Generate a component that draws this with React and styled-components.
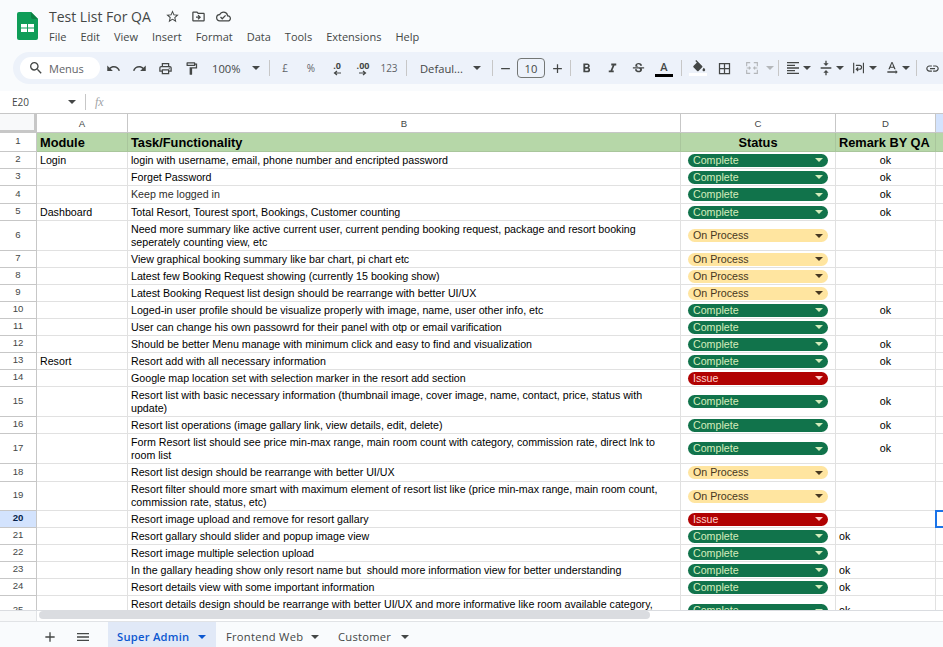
import React from 'react';
import styled, { createGlobalStyle } from 'styled-components';
import {
  MdSearch,
  MdUndo,
  MdRedo,
  MdOutlinePrint,
  MdOutlineFormatPaint,
  MdAdd,
  MdRemove,
  MdFormatBold,
  MdFormatItalic,
  MdStrikethroughS,
  MdBorderAll,
  MdFormatAlignLeft,
  MdVerticalAlignCenter,
  MdTextRotationNone,
  MdLink,
  MdStarBorder,
  MdOutlineDriveFileMove,
  MdOutlineCloudDone,
  MdMenu,
} from 'react-icons/md';

const GlobalStyle = createGlobalStyle`
  html, body { margin: 0; padding: 0; background: #fff; overflow: hidden; }
  * { box-sizing: border-box; }
`;

const UI_FONT = `"Open Sans", "Noto Sans", sans-serif`;
const CELL_FONT = `"Liberation Sans", Arial, sans-serif`;

const Page = styled.div`
  width: 943px;
  height: 647px;
  display: flex;
  flex-direction: column;
  overflow: hidden;
  font-family: ${UI_FONT};
  background: #fff;
`;

const Top = styled.header`
  height: 91px;
  background: #f9fbfd;
  flex-shrink: 0;
`;

const TitleBar = styled.div`
  height: 52px;
  display: flex;
  padding: 12px 0 0 17px;
`;

const TitleColumn = styled.div`
  margin-left: 11px;
  margin-top: -7px;
`;

const TitleRow = styled.div`
  display: flex;
  align-items: center;
  height: 22px;
  color: #444746;
`;

const DocTitle = styled.div`
  font-size: 14px;
  color: #444746;
  width: 111px;
  white-space: nowrap;
`;

const TitleIcon = styled.span`
  width: 25.5px;
  display: flex;
  justify-content: center;
  font-size: 15px;
  color: #444746;
`;

const MenuBar = styled.nav`
  display: flex;
  margin-left: -7px;
  margin-top: 2px;
`;

const MenuItem = styled.span`
  padding: 0 7px;
  font-size: 11px;
  line-height: 16px;
  color: #444746;
  white-space: nowrap;
`;

const Toolbar = styled.div`
  height: 32px;
  margin-left: 13px;
  padding-left: 7px;
  background: #edf2fa;
  border-radius: 16px 0 0 16px;
  display: flex;
  align-items: center;
  color: #444746;
  overflow: hidden;
`;

const SearchPill = styled.div`
  width: 80px;
  height: 22px;
  flex-shrink: 0;
  padding-left: 8px;
  background: #fff;
  border-radius: 11px;
  display: flex;
  align-items: center;
  gap: 5px;
  font-size: 11px;
  color: #5f6368;
  svg { font-size: 16px; color: #444746; }
`;

const Tool = styled.div`
  width: ${(p) => p.$w || 26}px;
  height: 24px;
  flex-shrink: 0;
  display: flex;
  align-items: center;
  justify-content: center;
  font-size: ${(p) => p.$size || 15}px;
  color: ${(p) => (p.$disabled ? '#b4b7ba' : '#444746')};
`;

const DropTool = styled.div`
  width: ${(p) => p.$w || 33}px;
  height: 24px;
  flex-shrink: 0;
  padding-left: ${(p) => p.$pad ?? 4}px;
  display: flex;
  align-items: center;
  font-size: ${(p) => p.$size || 11.2}px;
  color: ${(p) => (p.$disabled ? '#b4b7ba' : '#444746')};
  svg { width: 18px; height: 16px; flex-shrink: 0; }
`;

const ToolLabel = styled.span`
  width: ${(p) => p.$w}px;
  flex-shrink: 0;
  white-space: nowrap;
`;

const Triangle = styled.i`
  display: block;
  flex-shrink: 0;
  width: 0;
  height: 0;
  margin-left: ${(p) => p.$ml || 1}px;
  border-left: 4px solid transparent;
  border-right: 4px solid transparent;
  border-top: 4px solid ${(p) => p.$color || '#444746'};
`;

const Sep = styled.div`
  width: 1px;
  height: 16px;
  flex-shrink: 0;
  margin: 0 ${(p) => p.$r ?? 2}px 0 ${(p) => p.$l ?? 2}px;
  background: #c7c7c7;
`;

const SmallText = styled.span`
  font-size: ${(p) => p.$size || 10}px;
  color: #5f6368;
`;

const DecimalBox = styled.div`
  display: flex;
  flex-direction: column;
  align-items: center;
  line-height: 9px;
  font-size: 9px;
  font-weight: 700;
  color: #444746;
  svg { display: block; }
`;

const FontSizeBox = styled.div`
  width: 28px;
  height: 20px;
  flex-shrink: 0;
  border: 1px solid #747775;
  border-radius: 4px;
  display: flex;
  align-items: center;
  justify-content: center;
  font-size: 11.2px;
  color: #444746;
`;

const ColorIcon = styled.div`
  display: flex;
  flex-direction: column;
  align-items: center;
  font-size: 11px;
  font-weight: 600;
  line-height: 13px;
  color: #444746;
`;

const ColorBar = styled.div`
  width: 18px;
  height: 3px;
  margin-top: 1px;
  background: ${(p) => p.$color};
`;

const FormulaBar = styled.div`
  height: 22px;
  flex-shrink: 0;
  padding-left: 12px;
  display: flex;
  align-items: center;
  background: #fff;
`;

const NameBox = styled.div`
  width: 55px;
  font-size: 10px;
  color: #444746;
`;

const FxLabel = styled.span`
  margin-left: 9px;
  font-family: "Liberation Serif", serif;
  font-style: italic;
  font-size: 12px;
  color: #a0a3a6;
`;

const Sheet = styled.div`
  height: 498px;
  flex-shrink: 0;
  overflow: hidden;
  border-top: 1px solid #c7c7c7;
  border-bottom: 1px solid #dadce0;
  font-family: ${CELL_FONT};
  background: #fff;
`;

const Row = styled.div`
  display: flex;
  height: ${(p) => p.$h}px;
`;

const Corner = styled.div`
  width: 37px;
  flex-shrink: 0;
  background: #f8f9fa;
  border-right: 3px solid #c7c7c7;
  border-bottom: 3px solid #c7c7c7;
`;

const ColHead = styled.div`
  width: ${(p) => p.$w}px;
  flex-shrink: 0;
  border-right: 1px solid #c7c7c7;
  border-bottom: 1px solid #c7c7c7;
  background: ${(p) => (p.$active ? '#d3e3fd' : '#fff')};
  display: flex;
  align-items: center;
  justify-content: center;
  font-size: 9.6px;
  color: #444746;
`;

const RowHead = styled.div`
  width: 37px;
  flex-shrink: 0;
  border-right: 1px solid #c7c7c7;
  border-bottom: 1px solid #c7c7c7;
  background: ${(p) => (p.$active ? '#d3e3fd' : '#fff')};
  display: flex;
  align-items: center;
  justify-content: center;
  font-size: 9.6px;
  font-weight: ${(p) => (p.$active ? 700 : 400)};
  color: ${(p) => (p.$active ? '#041e49' : '#444746')};
  padding-bottom: 3px;
`;

const Cell = styled.div`
  position: relative;
  width: ${(p) => p.$w}px;
  flex-shrink: 0;
  padding: 0 3px;
  border-right: 1px solid ${(p) => (p.$head ? '#a9c69c' : '#e1e1e1')};
  border-bottom: 1px solid ${(p) => (p.$head ? '#a9c69c' : '#e1e1e1')};
  background: ${(p) => (p.$head ? '#b6d7a8' : '#fff')};
  display: flex;
  align-items: center;
  justify-content: ${(p) => (p.$center ? 'center' : 'flex-start')};
  text-align: ${(p) => (p.$center ? 'center' : 'left')};
  font-size: ${(p) => (p.$head ? '12.8px' : '10.67px')};
  font-weight: ${(p) => (p.$head ? 700 : 400)};
  line-height: 13px;
  white-space: pre-wrap;
  color: ${(p) => (p.$muted ? '#2e2e2e' : '#000')};
  ${(p) =>
    p.$selected &&
    `&::after {
      content: '';
      position: absolute;
      left: -1px;
      top: -1px;
      right: -4px;
      bottom: -1px;
      border: 2px solid #1a73e8;
    }`}
`;

const StatusCell = styled(Cell)`
  padding: 0 0 0 7px;
`;

const STATUS = {
  Complete: { bg: '#11734b', fg: '#d4edbc' },
  'On Process': { bg: '#ffe5a0', fg: '#473821' },
  Issue: { bg: '#b10202', fg: '#ffcfc9' },
};

const Pill = styled.div`
  width: 140px;
  height: 13px;
  flex-shrink: 0;
  padding: 0 5px;
  border-radius: 7px;
  background: ${(p) => STATUS[p.$status].bg};
  color: ${(p) => STATUS[p.$status].fg};
  display: flex;
  align-items: center;
  justify-content: space-between;
  font-size: 10.67px;
`;

const ScrollTrack = styled.div`
  height: 10px;
  flex-shrink: 0;
  display: flex;
  background: #fff;
`;

const ScrollGutter = styled.div`
  width: 37px;
  flex-shrink: 0;
  background: #f8f9fa;
  border-right: 1px solid #e1e3e6;
`;

const ScrollThumb = styled.div`
  width: 611px;
  height: 8px;
  margin-left: 2px;
  border-radius: 4px;
  background: #dadce0;
`;

const TabBar = styled.footer`
  height: 26px;
  flex-shrink: 0;
  border-top: 1px solid #e1e3e6;
  background: #f9fbfd;
  display: flex;
  padding-left: 33px;
  color: #444746;
`;

const TabIcon = styled.div`
  width: 33px;
  padding-top: 4px;
  display: flex;
  align-items: center;
  justify-content: center;
  font-size: 16px;
`;

const Tab = styled.div`
  width: ${(p) => p.$w}px;
  margin-left: ${(p) => p.$ml || 0}px;
  padding: 4px 0 0 ${(p) => p.$pl || 0}px;
  display: flex;
  align-items: center;
  background: ${(p) => (p.$active ? '#e1e9f7' : 'transparent')};
  color: ${(p) => (p.$active ? '#0b57d0' : '#444746')};
  font-size: 11.2px;
  font-weight: ${(p) => (p.$active ? 600 : 500)};
  letter-spacing: 0.25px;
  white-space: nowrap;
`;

const columns = [
  { label: 'A', w: 91 },
  { label: 'B', w: 553 },
  { label: 'C', w: 155 },
  { label: 'D', w: 100 },
];

const C = 'Complete';
const P = 'On Process';
const I = 'Issue';

// [row no, height, module, task, status, remark, remark centered]
const rows = [
  [2, 17, 'Login', 'login with username, email, phone number and encripted password', C, 'ok', true],
  [3, 17, '', 'Forget Password', C, 'ok', true],
  [4, 18, '', 'Keep me logged in', C, 'ok', true],
  [5, 17, 'Dashboard', 'Total Resort, Tourest sport, Bookings, Customer counting', C, 'ok', true],
  [6, 30, '', 'Need more summary like active current user, current pending booking request, package and resort booking seperately counting view, etc', P],
  [7, 17, '', 'View graphical booking summary like bar chart, pi chart etc', P],
  [8, 17, '', 'Latest few Booking Request showing (currently 15 booking show)', P],
  [9, 17, '', 'Latest Booking Request list design should be rearrange with better UI/UX', P],
  [10, 17, '', 'Loged-in user profile should be visualize properly with image, name, user other info, etc', C, 'ok', true],
  [11, 17, '', 'User can change his own passowrd for their panel with otp or email varification', C],
  [12, 17, '', 'Should be better Menu manage with minimum click and easy to find and visualization', C, 'ok', true],
  [13, 17, 'Resort', 'Resort add with all necessary information', C, 'ok', true],
  [14, 17, '', 'Google map location set with selection marker in the resort add section', I],
  [15, 30, '', 'Resort list with basic necessary information (thumbnail image, cover image, name, contact, price, status with update)', C, 'ok', true],
  [16, 17, '', 'Resort list operations (image gallary link, view details, edit, delete)', C, 'ok', true],
  [17, 30, '', 'Form Resort list should see price min-max range, main room count with category, commission rate, direct lnk to room list', C, 'ok', true],
  [18, 18, '', 'Resort list design should be rearrange with better UI/UX', P],
  [19, 29, '', 'Resort filter should more smart with maximum element of resort list like (price min-max range, main room count, commission rate, status, etc)', P],
  [20, 17, '', 'Resort image upload and remove for resort gallary', I],
  [21, 17, '', 'Resort gallary should slider and popup image view', C, 'ok'],
  [22, 17, '', 'Resort image multiple selection upload', C],
  [23, 17, '', 'In the gallary heading show only resort name but  should more information view for better understanding', C, 'ok'],
  [24, 17, '', 'Resort details view with some important information', C, 'ok'],
  [25, 30, '', 'Resort details design should be rearrange with better UI/UX and more informative like room available category, price etc', C, 'ok'],
];

const menus = ['File', 'Edit', 'View', 'Insert', 'Format', 'Data', 'Tools', 'Extensions', 'Help'];

function SheetsLogo() {
  return (
    <svg width="21" height="28" viewBox="0 0 21 28">
      <path d="M2 0h12l7 7v19a2 2 0 0 1-2 2H2a2 2 0 0 1-2-2V2a2 2 0 0 1 2-2z" fill="#0f9d58" />
      <path d="M14 0l7 7h-5a2 2 0 0 1-2-2z" fill="#0b8043" />
      <path d="M4 12h13v8H4z" fill="#fff" />
      <path d="M10 12h1v8h-1zM4 15.5h13v1H4z" fill="#0f9d58" />
    </svg>
  );
}

function DecimalIcon({ text, right }) {
  return (
    <DecimalBox>
      {text}
      <svg width="10" height="6" viewBox="0 0 10 6">
        <path
          d={right ? 'M1 3h6M5 1l2.5 2L5 5' : 'M9 3H3M5 1L2.5 3 5 5'}
          fill="none"
          stroke="#444746"
          strokeWidth="1.2"
        />
      </svg>
    </DecimalBox>
  );
}

function FillIcon() {
  return (
    <svg width="15" height="12" viewBox="0 0 22 18" fill="#444746">
      <path d="M16.56 8.94L7.62 0 6.21 1.41l2.38 2.38-5.15 5.15c-.59.59-.59 1.54 0 2.12l5.5 5.5c.29.29.68.44 1.06.44s.77-.15 1.06-.44l5.5-5.5c.59-.58.59-1.53 0-2.12z" />
      <path d="M19 11.5s-2 2.17-2 3.5c0 1.1.9 2 2 2s2-.9 2-2c0-1.33-2-3.5-2-3.5z" />
    </svg>
  );
}

function MergeIcon() {
  return (
    <svg viewBox="0 0 18 18" fill="none" stroke="#b4b7ba" strokeWidth="1.3">
      <path d="M3 7V3h4M11 3h4v4M3 11v4h4M11 15h4v-4" />
      <path d="M3 9h4M5.5 7.5L7 9l-1.5 1.5M15 9h-4M12.5 7.5L11 9l1.5 1.5" />
    </svg>
  );
}

function WrapIcon() {
  return (
    <svg viewBox="0 0 18 18" fill="none" stroke="#444746" strokeWidth="1.3">
      <path d="M3 3v12M14 3v12" />
      <path d="M5.5 5h4.2a2.2 2.2 0 0 1 0 4.4H6M8 7.4L6 9.4l2 2" transform="translate(0 1)" />
    </svg>
  );
}

function Status({ status }) {
  return (
    <Pill $status={status}>
      {status}
      <Triangle $color={STATUS[status].fg} />
    </Pill>
  );
}

function DataRow({ row }) {
  const [num, height, module, task, status, remark, centered] = row;
  const active = num === 20;
  return (
    <Row $h={height}>
      <RowHead $active={active}>{num}</RowHead>
      <Cell $w={91}>{module}</Cell>
      <Cell $w={553} $muted={num === 4}>
        {task}
      </Cell>
      <StatusCell $w={155}>
        <Status status={status} />
      </StatusCell>
      <Cell $w={100} $center={centered}>
        {remark}
      </Cell>
      <Cell $w={40} $selected={active} />
    </Row>
  );
}

export default function App() {
  return (
    <Page>
      <GlobalStyle />
      <Top>
        <TitleBar>
          <SheetsLogo />
          <TitleColumn>
            <TitleRow>
              <DocTitle>Test List For QA</DocTitle>
              <TitleIcon>
                <MdStarBorder />
              </TitleIcon>
              <TitleIcon>
                <MdOutlineDriveFileMove />
              </TitleIcon>
              <TitleIcon>
                <MdOutlineCloudDone />
              </TitleIcon>
            </TitleRow>
            <MenuBar>
              {menus.map((m) => (
                <MenuItem key={m}>{m}</MenuItem>
              ))}
            </MenuBar>
          </TitleColumn>
        </TitleBar>
        <Toolbar>
          <SearchPill>
            <MdSearch />
            Menus
          </SearchPill>
          <Tool><MdUndo /></Tool>
          <Tool><MdRedo /></Tool>
          <Tool><MdOutlinePrint /></Tool>
          <Tool><MdOutlineFormatPaint /></Tool>
          <DropTool $w={64} $pad={8}>
            <ToolLabel $w={39}>100%</ToolLabel>
            <Triangle />
          </DropTool>
          <Sep $l={1} $r={2} />
          <Tool><SmallText>£</SmallText></Tool>
          <Tool><SmallText>%</SmallText></Tool>
          <Tool><DecimalIcon text=".0" /></Tool>
          <Tool><DecimalIcon text=".00" right /></Tool>
          <Tool><SmallText>123</SmallText></Tool>
          <Sep $l={4} $r={1} />
          <DropTool $w={84} $pad={12}>
            <ToolLabel $w={52}>Defaul...</ToolLabel>
            <Triangle />
          </DropTool>
          <Sep $l={0} $r={0} />
          <Tool $w={24}><MdRemove /></Tool>
          <FontSizeBox>10</FontSizeBox>
          <Tool $w={25}><MdAdd /></Tool>
          <Sep $l={0} $r={2} />
          <Tool><MdFormatBold /></Tool>
          <Tool><MdFormatItalic /></Tool>
          <Tool><MdStrikethroughS /></Tool>
          <Tool>
            <ColorIcon>
              A
              <ColorBar $color="#000" />
            </ColorIcon>
          </Tool>
          <Sep $l={4} $r={3} />
          <Tool>
            <ColorIcon>
              <FillIcon />
              <ColorBar $color="#fff" />
            </ColorIcon>
          </Tool>
          <Tool><MdBorderAll /></Tool>
          <DropTool $w={41} $pad={6} $disabled>
            <MergeIcon />
            <Triangle $color="#b4b7ba" $ml={5} />
          </DropTool>
          <Sep $l={0} $r={1} />
          <DropTool><MdFormatAlignLeft /><Triangle /></DropTool>
          <DropTool><MdVerticalAlignCenter /><Triangle /></DropTool>
          <DropTool><WrapIcon /><Triangle /></DropTool>
          <DropTool><MdTextRotationNone /><Triangle /></DropTool>
          <Sep $l={4} $r={2} />
          <Tool><MdLink /></Tool>
        </Toolbar>
      </Top>
      <FormulaBar>
        <NameBox>E20</NameBox>
        <Triangle />
        <Sep $l={9} $r={0} />
        <FxLabel>fx</FxLabel>
      </FormulaBar>
      <Sheet>
        <Row $h={19}>
          <Corner />
          {columns.map((c) => (
            <ColHead key={c.label} $w={c.w}>
              {c.label}
            </ColHead>
          ))}
          <ColHead $w={40} $active />
        </Row>
        <Row $h={19}>
          <RowHead>1</RowHead>
          <Cell $w={91} $head>Module</Cell>
          <Cell $w={553} $head>Task/Functionality</Cell>
          <Cell $w={155} $head $center>Status</Cell>
          <Cell $w={100} $head>Remark BY QA</Cell>
          <Cell $w={40} $head />
        </Row>
        {rows.map((r) => (
          <DataRow key={r[0]} row={r} />
        ))}
      </Sheet>
      <ScrollTrack>
        <ScrollGutter />
        <ScrollThumb />
      </ScrollTrack>
      <TabBar>
        <TabIcon><MdAdd /></TabIcon>
        <TabIcon><MdMenu /></TabIcon>
        <Tab $w={108} $ml={9} $pl={9} $active>
          <ToolLabel $w={80}>Super Admin</ToolLabel>
          <Triangle $color="#0b57d0" />
        </Tab>
        <Tab $w={112} $pl={10}>
          <ToolLabel $w={84}>Frontend Web</ToolLabel>
          <Triangle />
        </Tab>
        <Tab $w={90} $pl={10}>
          <ToolLabel $w={62}>Customer</ToolLabel>
          <Triangle />
        </Tab>
      </TabBar>
    </Page>
  );
}
